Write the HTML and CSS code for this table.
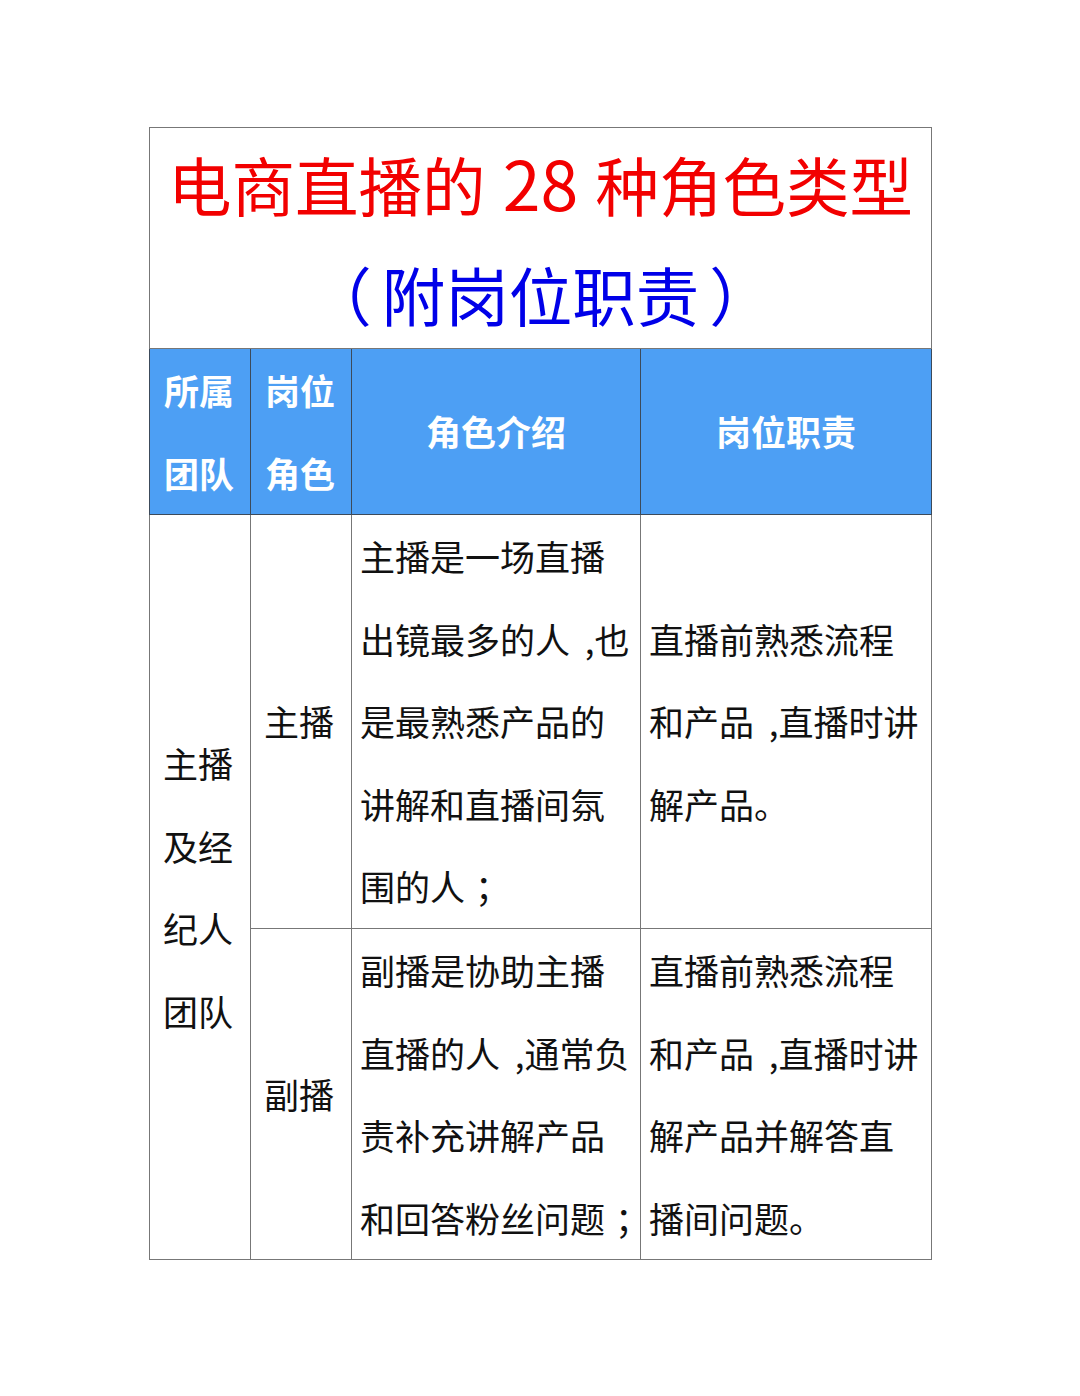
FILE: index.html
```html
<!DOCTYPE html>
<html lang="zh-CN">
<head>
<meta charset="utf-8">
<link rel="stylesheet" href="styles.css">
</head>
<body>
<div class="page">
  <table class="roles">
    <colgroup>
      <col class="c1"><col class="c2"><col class="c3"><col class="c4">
    </colgroup>
    <tr class="title-row">
      <td colspan="4" class="title">
        <div class="t1">电商直播的 <span class="num">28</span> 种角色类型</div>
        <div class="t2"><span class="lp">（</span>附岗位职责<span class="rp">）</span></div>
      </td>
    </tr>
    <tr class="head">
      <th class="lt">所属<br>团队</th>
      <th class="lt">岗位<br>角色</th>
      <th>角色介绍</th>
      <th>岗位职责</th>
    </tr>
    <tr>
      <td rowspan="2" class="team">主播<br>及经<br>纪人<br>团队</td>
      <td class="role">主播</td>
      <td class="txt">主播是一场直播<br>出镜最多的人 ,也<br>是最熟悉产品的<br>讲解和直播间氛<br>围的人<span class="semi">；</span></td>
      <td class="txt">直播前熟悉流程<br>和产品 ,直播时讲<br>解产品。</td>
    </tr>
    <tr>
      <td class="role">副播</td>
      <td class="txt">副播是协助主播<br>直播的人 ,通常负<br>责补充讲解产品<br>和回答粉丝问题<span class="semi">；</span></td>
      <td class="txt">直播前熟悉流程<br>和产品 ,直播时讲<br>解产品并解答直<br>播间问题。</td>
    </tr>
  </table>
</div>
</body>
</html>
```

FILE: styles.css
```css
html, body {
  margin: 0;
  padding: 0;
  background: #ffffff;
}

body {
  font-family: "Noto Sans CJK SC", "Noto Sans", sans-serif;
  color: #111111;
}

.page {
  padding: 127px 0 0 149px;
}

.roles {
  border-collapse: collapse;
  table-layout: fixed;
  width: 783px;
  border: 1px solid #4a4a4a;
}

.c1 { width: 101px; }
.c2 { width: 101px; }
.c3 { width: 289px; }
.c4 { width: 291px; }

.roles td,
.roles th {
  border: 1px solid #777777;
  padding: 0;
}

.title {
  text-align: center;
  font-size: 63.5px;
  line-height: 110px;
  height: 220px;
  font-weight: normal;
  white-space: nowrap;
}

.t1 { color: #f20000; }
.t2 { color: #0000e8; }

.num {
  display: inline-block;
  font-size: 68px;
  line-height: 60px;
  margin: 0 3px;
}

.lp { margin-left: -16px; margin-right: 10px; }
.rp { margin-left: 10px; margin-right: -16px; }

.head th {
  background: #4d9ff4;
  color: #ffffff;
  font-size: 35px;
  font-weight: bold;
  line-height: 82.5px;
  height: 165px;
  text-align: center;
  border-color: #3c4a5a;
  white-space: nowrap;
}

.head th.lt {
  text-align: left;
  padding-left: 14px;
}

.roles td.team,
.roles td.role,
.roles td.txt {
  font-size: 35px;
  line-height: 82.6px;
  vertical-align: middle;
  white-space: nowrap;
}

.roles td.team {
  padding-left: 13px;
}

.roles td.role {
  padding-left: 13px;
}

.roles td.txt {
  padding-left: 8px;
  word-spacing: 7px;
}

.semi {
  margin-left: 10px;
}
```
